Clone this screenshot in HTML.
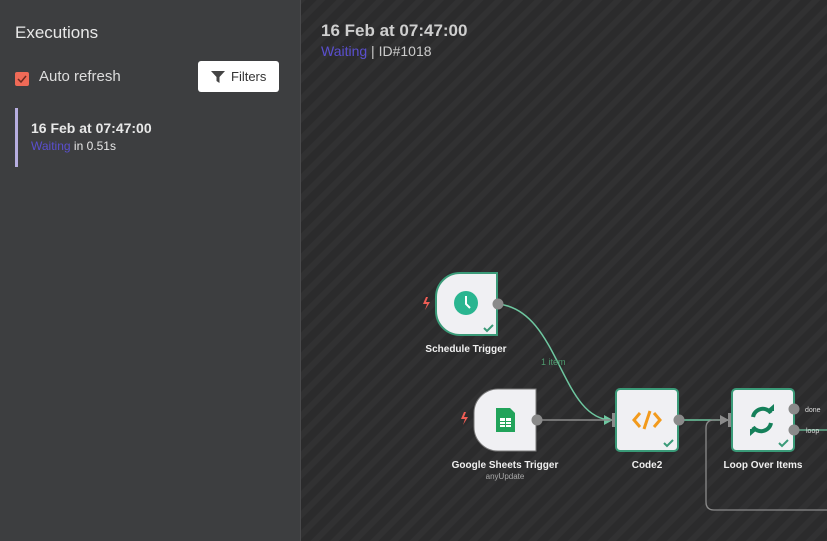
<!DOCTYPE html><html><head><style>
body{margin:0;width:827px;height:541px;overflow:hidden;font-family:"Liberation Sans",sans-serif;background:#2a2a2b}
#l{position:absolute;left:0;top:0;width:300px;height:541px;background:#3d3e40;border-right:1px solid #4a4a4c}
.t{position:absolute;color:#e8e8e8}
</style></head><body>
<svg width="827" height="541" style="position:absolute;left:0;top:0">
<defs><pattern id="p" width="14" height="14" patternUnits="userSpaceOnUse" patternTransform="rotate(-45)"><rect width="14" height="14" fill="#2b2b2c"/><rect width="14" height="6" fill="#313132"/></pattern></defs>
<rect width="827" height="541" fill="url(#p)"/>
<path d="M498 304 C560 310,560 420,612 420" stroke="#6ec7a0" stroke-width="1.5" fill="none"/>
<path d="M604 415 L613 420 L604 425Z" fill="#6ec7a0"/>
<text x="541" y="365" fill="#4f9a6e" font-size="9" font-family="Liberation Sans">1 item</text>
<path d="M537 420 H612" stroke="#8a8a8a" stroke-width="1.5"/>
<path d="M679 420 H728" stroke="#6ec7a0" stroke-width="1.5"/>
<path d="M720 415 L729 420 L720 425Z" fill="#8a8a8a"/>
<path d="M730 420 H714 Q706 420 706 428 V502 Q706 510 714 510 H827" stroke="#8a8a8a" stroke-width="1.3" fill="none"/>
<path d="M794 430 H827" stroke="#6ec7a0" stroke-width="1.3"/>
<rect x="612" y="413" width="6" height="14" fill="#8a8a8a"/>
<rect x="728" y="413" width="6" height="14" fill="#8a8a8a"/>
<path d="M460 273 H497 V335 H460 A24 24 0 0 1 436 311 V297 A24 24 0 0 1 460 273Z" fill="#f0f0f3" stroke="#3a9a78" stroke-width="2"/>
<circle cx="466" cy="303" r="12" fill="#2ab590"/><path d="M466 296 V304 L470 308" stroke="#fff" stroke-width="2" fill="none"/>
<path d="M484 328 l3 3 l6 -6" stroke="#3a9a78" stroke-width="2" fill="none"/>
<path d="M498 389 H536 V451 H498 A24 24 0 0 1 474 427 V413 A24 24 0 0 1 498 389Z" fill="#f0f0f3" stroke="#777" stroke-width="1"/>
<path d="M496 408 H510 L515 413 V432 H496Z" fill="#21a35a"/><rect x="500" y="418" width="11" height="9" fill="#fff"/><path d="M500 421.5 H511 M500 424.5 H511 M505.5 418 V427" stroke="#21a35a"/>
<rect x="616" y="389" width="62" height="62" rx="4" fill="#f0f0f3" stroke="#3a9a78" stroke-width="2"/>
<path d="M640 413 L634 420 L640 427 M654 413 L660 420 L654 427 M650 411 L644 429" stroke="#f29a1c" stroke-width="3" fill="none"/>
<path d="M664 443 l3 3 l6 -6" stroke="#3a9a78" stroke-width="2" fill="none"/>
<rect x="732" y="389" width="62" height="62" rx="4" fill="#f0f0f3" stroke="#3a9a78" stroke-width="2"/>
<path d="M753 417 A10 10 0 0 1 771 413 M771 423 A10 10 0 0 1 753 427" stroke="#15805a" stroke-width="4" fill="none"/>
<path d="M766 411 h8 v-7Z M758 429 h-8 v7Z" fill="#15805a"/>
<path d="M779 443 l3 3 l6 -6" stroke="#3a9a78" stroke-width="2" fill="none"/>
<circle cx="498" cy="304" r="5.5" fill="#8a8a8a"/><circle cx="537" cy="420" r="5.5" fill="#8a8a8a"/><circle cx="679" cy="420" r="5.5" fill="#8a8a8a"/><circle cx="794" cy="409" r="5.5" fill="#8a8a8a"/><circle cx="794" cy="430" r="5.5" fill="#8a8a8a"/>
<path d="M426 297 l-3 7 h4 l-2 6 l5 -8 h-4 l2 -5Z" fill="#ef5d55"/>
<path d="M464 412 l-3 7 h4 l-2 6 l5 -8 h-4 l2 -5Z" fill="#ef5d55"/>
<g font-family="Liberation Sans" fill="#f0f0f0" font-size="10" font-weight="bold" text-anchor="middle">
<text x="466" y="352">Schedule Trigger</text><text x="505" y="468">Google Sheets Trigger</text><text x="647" y="468">Code2</text><text x="763" y="468">Loop Over Items</text></g>
<text x="505" y="479" fill="#aaa" font-size="8" text-anchor="middle" font-family="Liberation Sans">anyUpdate</text>
<text x="805" y="412" fill="#ddd" font-size="7" font-family="Liberation Sans">done</text>
<text x="806" y="433" fill="#ddd" font-size="7" font-family="Liberation Sans">loop</text>
</svg>
<div id="l"></div>
<div class="t" style="left:15px;top:23px;font-size:17px">Executions</div>
<div style="position:absolute;left:15px;top:72px;width:14px;height:14px;background:#ef6a57;border-radius:2px"><svg width="14" height="14"><path d="M3 7 l3 3 l5 -6" stroke="#6b2a20" stroke-width="1.5" fill="none"/></svg></div>
<div class="t" style="left:39px;top:68px;font-size:15px;color:#ddd">Auto refresh</div>
<div style="position:absolute;left:198px;top:61px;width:81px;height:31px;background:#fff;border-radius:3px;font-size:13px;color:#333;line-height:31px"><svg width="14" height="14" style="position:absolute;left:13px;top:9px"><path d="M0 1 H14 L8.5 7 V13 L5.5 11 V7Z" fill="#444"/></svg><span style="position:absolute;left:33px">Filters</span></div>
<div style="position:absolute;left:15px;top:108px;width:3px;height:59px;background:#b7aee0"></div>
<div class="t" style="left:31px;top:120px;font-size:14px;font-weight:bold">16 Feb at 07:47:00</div>
<div class="t" style="left:31px;top:139px;font-size:12px"><span style="color:#5a4fcf">Waiting</span> in 0.51s</div>
<div class="t" style="left:321px;top:21px;font-size:17px;font-weight:bold;color:#cfcfcf">16 Feb at 07:47:00</div>
<div class="t" style="left:321px;top:43px;font-size:14px;color:#ccc"><span style="color:#5a4fcf">Waiting</span> | ID#1018</div>
</body></html>
